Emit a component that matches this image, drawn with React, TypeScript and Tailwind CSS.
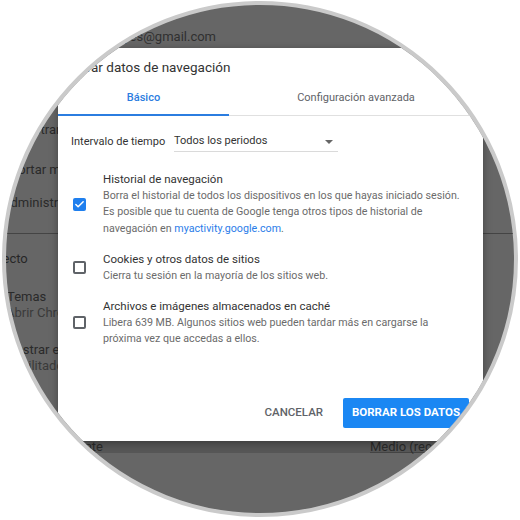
import { Check } from 'lucide-react'

function Box({ checked }: { checked?: boolean }) {
  if (checked) {
    return (
      <div className="w-[13px] h-[13px] rounded-[2px] bg-[#1f7fee] flex items-center justify-center">
        <Check size={11} strokeWidth={3.2} className="text-white" />
      </div>
    )
  }
  return <div className="w-[13px] h-[13px] rounded-[2px] border-2 border-[#5f6368]" />
}

function Item({ title, checked, children }: { title: string; checked?: boolean; children: React.ReactNode }) {
  return (
    <div className="flex items-center">
      <div className="w-[45px] pl-[15px] shrink-0">
        <Box checked={checked} />
      </div>
      <div className="leading-[16.5px] pr-[14px]">
        <div className="text-[11.5px] text-[#333]">{title}</div>
        <div className="text-[10.7px] text-[#6b6b6b]">{children}</div>
      </div>
    </div>
  )
}

export default function App() {
  return (
    <div className="w-[520px] h-[520px] bg-white pt-[1px] pl-[2px] font-['Roboto','Liberation_Sans',sans-serif]">
      <div className="relative w-[516px] h-[516px] rounded-full border-4 border-[#cacaca] overflow-hidden bg-[#666]">
        {/* pagina de configuracion atenuada */}
        <div className="flex flex-col text-[13px] leading-4 text-[#2a2a2a] whitespace-nowrap">
          <div className="mt-[24px] w-[210px] text-right text-[#303030]">solvetic.reyes@gmail.com</div>
          <div className="mt-[77px] ml-[9px]">Mostrar botón</div>
          <div className="mt-[24px] -ml-[10px]">Importar marcadores</div>
          <div className="mt-[17px] -ml-[4px]">Administrar otras personas</div>
          <div className="mt-[22px] h-px bg-[#444]" />
          <div className="mt-[17px] -ml-[26px] text-[#262626]">Aspecto</div>
          <div className="mt-[22px] ml-[1px]">Temas</div>
          <div className="text-[#3a3a3a]">Abrir Chrome Web Store</div>
          <div className="mt-[21px] -ml-[2px]">Mostrar el botón de página principal</div>
          <div className="-ml-[10px] text-[#3a3a3a]">Inhabilitado</div>
          <div className="mt-[67px] h-[12px] bg-[#575757] flex leading-[12px]">
            <div className="w-[97px] shrink-0 flex justify-end">
              <span className="shrink-0">Tamaño de fuente</span>
            </div>
            <div className="ml-[267px] border-b border-[#444] pb-[3px]">Medio (recomendado)</div>
          </div>
        </div>

        {/* dialogo */}
        <div className="absolute left-[52px] top-[43px] w-[425px] h-[393px] bg-white shadow-[0_2px_8px_rgba(0,0,0,0.35)] flex flex-col whitespace-nowrap">
          <div className="h-[34px] pl-[8px] pt-[11px] text-[13.5px] leading-4 text-[#333]">Borrar datos de navegación</div>

          <div className="h-[34px] flex text-[11px]">
            <div className="w-[171px] flex items-center justify-center font-medium text-[#2b7de0] border-b-2 border-[#2b7de0]">
              Básico
            </div>
            <div className="flex-1 flex items-center justify-center text-[#5f6368] border-b border-[#e0e0e0]">
              Configuración avanzada
            </div>
          </div>

          <div className="mt-[16px] h-[20px] pl-[13px] flex items-center text-[11px] text-[#333]">
            <div className="w-[90px] shrink-0">Intervalo de tiempo</div>
            <div className="ml-[13px] w-[164px] h-full border-b border-[#dadada] flex items-center justify-between pr-[5px]">
              <span>Todos los periodos</span>
              <svg width="8" height="4" viewBox="0 0 8 4">
                <path d="M0 0 L8 0 L4 4 Z" fill="#666" />
              </svg>
            </div>
          </div>

          <div className="mt-[19px] flex flex-col gap-[14px]">
            <Item title="Historial de navegación" checked>
              Borra el historial de todos los dispositivos en los que hayas iniciado sesión.
              <br />
              Es posible que tu cuenta de Google tenga otros tipos de historial de
              <br />
              navegación en <span className="text-[#2b7de9]">myactivity.google.com</span>.
            </Item>
            <Item title="Cookies y otros datos de sitios">Cierra tu sesión en la mayoría de los sitios web.</Item>
            <Item title="Archivos e imágenes almacenados en caché">
              Libera 639 MB. Algunos sitios web pueden tardar más en cargarse la
              <br />
              próxima vez que accedas a ellos.
            </Item>
          </div>

          <div className="mt-auto pb-[13px] pr-[14px] flex justify-end items-center gap-[7px] text-[11.5px] font-medium">
            <button className="h-[30px] px-[13px] text-[#5f6368]">CANCELAR</button>
            <button className="h-[30px] w-[126px] rounded-[2px] bg-[#1b87f3] text-white font-bold">BORRAR LOS DATOS</button>
          </div>
        </div>
      </div>
    </div>
  )
}
